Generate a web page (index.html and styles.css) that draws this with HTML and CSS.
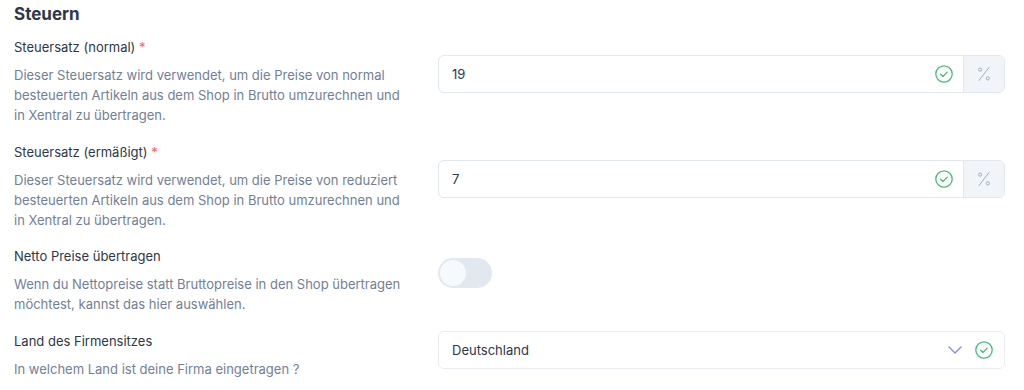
FILE: index.html
```html
<!DOCTYPE html>
<html lang="de">
<head>
<meta charset="utf-8">
<title>Steuern</title>
<link rel="stylesheet" href="styles.css">
</head>
<body>
<section class="section">
  <h2 class="title">Steuern</h2>

  <div class="row">
    <div class="info">
      <div class="label">Steuersatz (normal) <span class="req">*</span></div>
      <p class="desc">Dieser Steuersatz wird verwendet, um die Preise von normal besteuerten Artikeln aus dem Shop in Brutto umzurechnen und in Xentral zu übertragen.</p>
    </div>
    <div class="control control-input">
      <div class="field">
        <span class="value">19</span>
        <svg class="check" viewBox="0 0 18 18" width="18" height="18"><circle cx="9" cy="9" r="8.2" fill="none" stroke="#48bb78" stroke-width="1.3"/><path d="M5.6 9.3l2.3 2.2 4.3-4.4" fill="none" stroke="#48bb78" stroke-width="1.3" stroke-linecap="round" stroke-linejoin="round"/></svg>
        <span class="addon"><svg viewBox="0 0 16 16" width="16" height="16"><circle cx="4.2" cy="3.6" r="1.6" fill="none" stroke="#a0aec0" stroke-width="1"/><circle cx="11.8" cy="12.4" r="1.6" fill="none" stroke="#a0aec0" stroke-width="1"/><path d="M3 14.5L13 1.5" stroke="#a0aec0" stroke-width="1" stroke-linecap="round"/></svg></span>
      </div>
    </div>
  </div>

  <div class="row">
    <div class="info">
      <div class="label">Steuersatz (ermäßigt) <span class="req">*</span></div>
      <p class="desc">Dieser Steuersatz wird verwendet, um die Preise von reduziert besteuerten Artikeln aus dem Shop in Brutto umzurechnen und in Xentral zu übertragen.</p>
    </div>
    <div class="control control-input">
      <div class="field">
        <span class="value">7</span>
        <svg class="check" viewBox="0 0 18 18" width="18" height="18"><circle cx="9" cy="9" r="8.2" fill="none" stroke="#48bb78" stroke-width="1.3"/><path d="M5.6 9.3l2.3 2.2 4.3-4.4" fill="none" stroke="#48bb78" stroke-width="1.3" stroke-linecap="round" stroke-linejoin="round"/></svg>
        <span class="addon"><svg viewBox="0 0 16 16" width="16" height="16"><circle cx="4.2" cy="3.6" r="1.6" fill="none" stroke="#a0aec0" stroke-width="1"/><circle cx="11.8" cy="12.4" r="1.6" fill="none" stroke="#a0aec0" stroke-width="1"/><path d="M3 14.5L13 1.5" stroke="#a0aec0" stroke-width="1" stroke-linecap="round"/></svg></span>
      </div>
    </div>
  </div>

  <div class="row">
    <div class="info">
      <div class="label">Netto Preise übertragen</div>
      <p class="desc">Wenn du Nettopreise statt Bruttopreise in den Shop übertragen möchtest, kannst das hier auswählen.</p>
    </div>
    <div class="control control-toggle">
      <span class="toggle"><span class="knob"></span></span>
    </div>
  </div>

  <div class="row">
    <div class="info">
      <div class="label">Land des Firmensitzes</div>
      <p class="desc">In welchem Land ist deine Firma eingetragen ?</p>
    </div>
    <div class="control control-select">
      <div class="field select">
        <span class="value">Deutschland</span>
        <svg class="chevron" viewBox="0 0 14 8" width="14" height="8"><path d="M1 1l6 6 6-6" fill="none" stroke="#7f86f0" stroke-width="1.3" stroke-linecap="round" stroke-linejoin="round"/></svg>
        <svg class="check check-select" viewBox="0 0 18 18" width="18" height="18"><circle cx="9" cy="9" r="8.2" fill="none" stroke="#48bb78" stroke-width="1.3"/><path d="M5.6 9.3l2.3 2.2 4.3-4.4" fill="none" stroke="#48bb78" stroke-width="1.3" stroke-linecap="round" stroke-linejoin="round"/></svg>
      </div>
    </div>
  </div>
</section>
</body>
</html>
```

FILE: styles.css
```css
* { box-sizing: border-box; }
html, body { margin: 0; padding: 0; background: #ffffff; }
body {
  font-family: Inter, "Noto Sans", "Liberation Sans", sans-serif;
  font-size: 13px;
  color: #2d3748;
}
.section {
  padding: 0 19px 0 14px;
}
.title {
  margin: 0 0 9px;
  font-size: 17px;
  line-height: 28px;
  font-weight: 700;
  color: #2d3748;
}
.row {
  display: grid;
  grid-template-columns: 400px 1fr;
  column-gap: 24px;
  margin-bottom: 16.5px;
  align-items: start;
}
.label {
  line-height: 20px;
  color: #2d3748;
}
.req { color: #f56565; }
.desc {
  margin: 8px 0 0;
  line-height: 20px;
  color: #718096;
}
.control-input { padding-top: 18px; }
.control-toggle { padding-top: 12px; }
.control-select { padding-top: 0; }

.field {
  display: flex;
  align-items: center;
  height: 38px;
  border: 1px solid #e2e8f0;
  border-radius: 6px;
  background: #fff;
  overflow: hidden;
}
.value {
  flex: 1;
  padding-left: 13px;
  color: #2d3748;
}
.check { flex: none; margin-right: 10px; }
.addon {
  flex: none;
  width: 41px;
  align-self: stretch;
  display: flex;
  align-items: center;
  justify-content: center;
  background: #f1f4f8;
  border-left: 1px solid #e2e8f0;
}
.select { border-color: #e9edf3; }
.chevron { flex: none; margin-right: 13px; }
.check-select { margin-right: 11px; }

.toggle {
  display: block;
  width: 54px;
  height: 30px;
  border-radius: 15px;
  background: #e2e8f0;
  padding: 2px;
}
.knob {
  display: block;
  width: 26px;
  height: 26px;
  border-radius: 50%;
  background: #f7fafc;
}
```
